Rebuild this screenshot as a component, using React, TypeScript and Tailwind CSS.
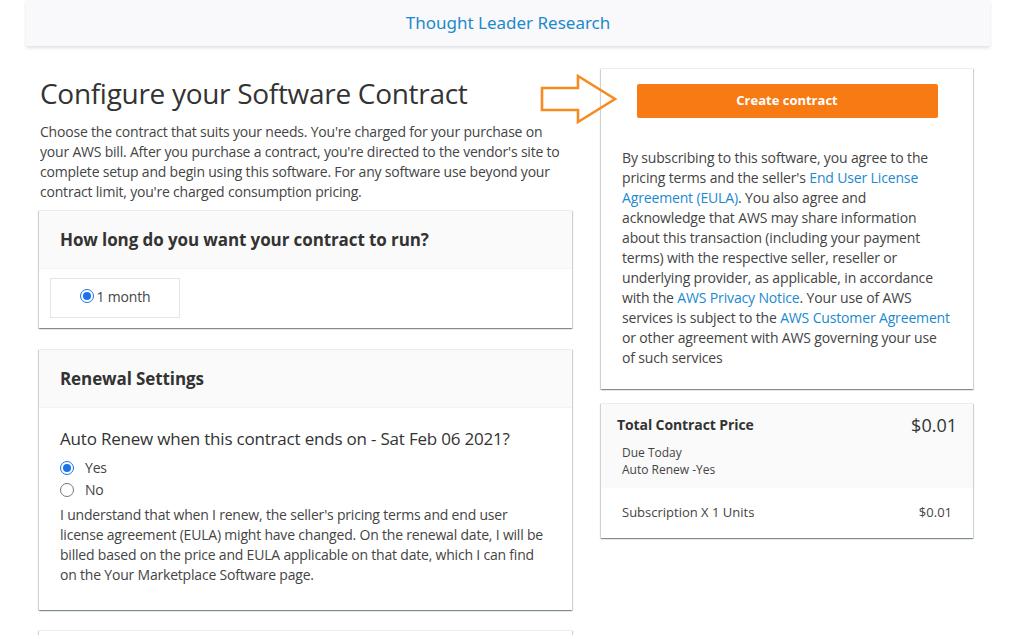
import React from "react";

const FONT = { fontFamily: '"Open Sans", "Noto Sans", sans-serif' };

function Radio({ checked }: { checked?: boolean }) {
  return (
    <span
      className={`inline-flex h-[14px] w-[14px] shrink-0 items-center justify-center rounded-full border ${
        checked ? "border-[#1a73e8] bg-white" : "border-[#767676] bg-white"
      }`}
    >
      {checked && <span className="h-[8px] w-[8px] rounded-full bg-[#1a73e8]" />}
    </span>
  );
}

function Card({ title, children, className = "" }: { title?: string; children: React.ReactNode; className?: string }) {
  return (
    <div
      className={`border-t border-[#eaeded] bg-white shadow-[0_1px_1px_0_rgba(0,28,36,0.3),1px_1px_1px_0_rgba(0,28,36,0.15),-1px_1px_1px_0_rgba(0,28,36,0.15)] ${className}`}
    >
      {title && (
        <div className="flex h-[58px] items-center border-b border-[#f2f3f3] bg-[#fafafa] px-[21px]">
          <h2 className="text-[17px] font-bold tracking-[-0.1px] text-[#333]">{title}</h2>
        </div>
      )}
      {children}
    </div>
  );
}

function Arrow() {
  return (
    <svg width="80" height="52" viewBox="0 0 80 52" className="absolute left-[539px] top-[73px]">
      <path
        d="M3 15 L39 15 L39 3 L76 26 L39 49 L39 37 L3 37 Z"
        fill="none"
        stroke="#f68b1f"
        strokeWidth="2.6"
        strokeLinejoin="miter"
      />
    </svg>
  );
}

const Link = ({ children }: { children: React.ReactNode }) => (
  <a className="text-[#1a8ad0]">{children}</a>
);

export default function App() {
  return (
    <div
      className="relative h-[635px] w-[1024px] overflow-hidden bg-white text-[#444] tracking-[-0.2px]"
      style={FONT}
    >
      {/* top bar */}
      <div className="ml-[26px] flex h-[46px] w-[964px] items-center justify-center bg-[#f9f8fb] shadow-[0_2px_3px_rgba(0,0,0,0.12)]">
        <span className="text-[17px] tracking-normal text-[#1b8acb]" style={{ fontFamily: '"Noto Sans", sans-serif' }}>
          Thought Leader Research
        </span>
      </div>

      <Arrow />

      <div className="ml-[39px] mt-[22px] flex gap-[29px]">
        {/* left column */}
        <div className="w-[533px]">
          <h1 className="pl-[1px] text-[28px] leading-[50px] tracking-[-0.3px] text-[#333]">
            Configure your Software Contract
          </h1>
          <p className="mt-[4px] pl-[1px] text-[14px] leading-[20px] text-[#444]">
            Choose the contract that suits your needs. You're charged for your purchase on your AWS bill. After you
            purchase a contract, you're directed to the vendor's site to complete setup and begin using this software.
            For any software use beyond your contract limit, you're charged consumption pricing.
          </p>

          <Card title="How long do you want your contract to run?" className="mt-[8px]">
            <div className="px-[11px] pb-[10px] pt-[9px]">
              <div className="flex h-[40px] w-[130px] items-center justify-center gap-[3px] border border-[#e5e5e5] pb-[4px] text-[14px] text-[#444]">
                <Radio checked />
                <span>1 month</span>
              </div>
            </div>
          </Card>

          <Card title="Renewal Settings" className="mt-[21px]">
            <div className="px-[21px] pb-[25px] pt-[17px]">
              <p className="text-[17px] leading-[28px] tracking-[-0.2px] text-[#333]">
                Auto Renew when this contract ends on - Sat Feb 06 2021?
              </p>
              <div className="mt-[4px] flex items-center gap-[11px] text-[14px] leading-[22px]">
                <Radio checked />
                <span>Yes</span>
              </div>
              <div className="flex items-center gap-[11px] text-[14px] leading-[22px]">
                <Radio />
                <span>No</span>
              </div>
              <p className="mt-[4px] text-[14px] leading-[20px]">
                I understand that when I renew, the seller's pricing terms and end user license agreement (EULA) might
                have changed. On the renewal date, I will be billed based on the price and EULA applicable on that date,
                which I can find on the Your Marketplace Software page.
              </p>
            </div>
          </Card>

          <Card className="mt-[20px] h-[40px]">
            <div />
          </Card>
        </div>

        {/* right column */}
        <div className="w-[372px]">
          <Card>
            <div className="px-[21px] pb-[21px] pt-[15px]">
              <button className="mx-auto block h-[34px] w-[301px] rounded-[2px] bg-[#f87a15] text-[13px] font-bold tracking-normal text-white">
                Create contract
              </button>
              <p className="mt-[30px] text-[14px] leading-[20px] tracking-[-0.15px] text-[#444]">
                By subscribing to this software, you agree to the pricing terms and the seller's{" "}
                <Link>End User License Agreement (EULA)</Link>. You also agree and acknowledge that AWS may share
                information about this transaction (including your payment terms) with the respective seller, reseller or
                underlying provider, as applicable, in accordance with the <Link>AWS Privacy Notice</Link>. Your use of AWS
                services is subject to the <Link>AWS Customer Agreement</Link> or other agreement with AWS governing your
                use of such services
              </p>
            </div>
          </Card>

          <Card className="mt-[14px]">
            <div className="bg-[#fafafa] px-[16px] pb-[10px] pt-[10px]">
              <div className="flex items-start justify-between">
                <span className="text-[14px] font-bold leading-[22px] tracking-[-0.1px] text-[#333]">
                  Total Contract Price
                </span>
                <span className="text-[18px] leading-[22px] tracking-normal text-[#333]">$0.01</span>
              </div>
              <div className="mt-[8px] pl-[5px] text-[12px] leading-[17px] tracking-normal text-[#444]">
                <div>Due Today</div>
                <div>Auto Renew -Yes</div>
              </div>
            </div>
            <div className="flex h-[50px] items-center justify-between px-[21px] text-[13px] tracking-normal text-[#444]">
              <span>Subscription X 1 Units</span>
              <span>$0.01</span>
            </div>
          </Card>
        </div>
      </div>
    </div>
  );
}
